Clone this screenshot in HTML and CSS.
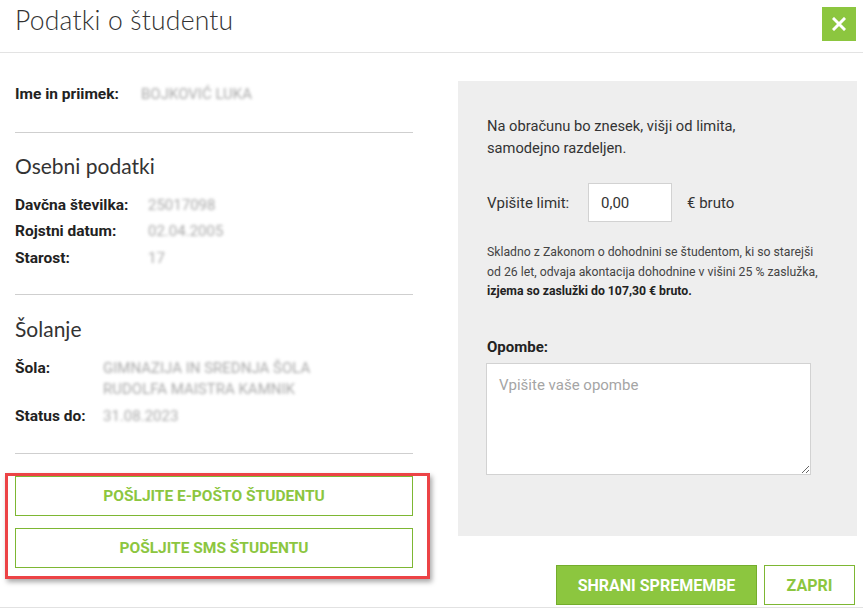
FILE: index.html
```html
<!DOCTYPE html>
<html lang="sl">
<head>
<meta charset="utf-8">
<title>Podatki o študentu</title>
<link rel="stylesheet" href="styles.css">
</head>
<body>
<div class="modal">
  <header class="header">
    <h1 class="title">Podatki o študentu</h1>
    <button class="close" aria-label="Zapri">
      <svg width="14" height="14" viewBox="0 0 14 14"><path d="M2 2 L12 12 M12 2 L2 12" stroke="#fff" stroke-width="3" stroke-linecap="square"/></svg>
    </button>
  </header>

  <div class="body">
    <div class="left">
      <dl class="info info-name">
        <dt>Ime in priimek:</dt><dd class="blur">BOJKOVIĆ LUKA</dd>
      </dl>
      <hr class="sep sep-first">
      <h2 class="section-title">Osebni podatki</h2>
      <dl class="info info-personal">
        <dt>Davčna številka:</dt><dd class="blur">25017098</dd>
        <dt>Rojstni datum:</dt><dd class="blur">02.04.2005</dd>
        <dt>Starost:</dt><dd class="blur">17</dd>
      </dl>
      <hr class="sep sep-mid">
      <h2 class="section-title section-title-school">Šolanje</h2>
      <dl class="info info-school">
        <dt>Šola:</dt><dd class="blur">GIMNAZIJA IN SREDNJA ŠOLA<br>RUDOLFA MAISTRA KAMNIK</dd>
        <dt>Status do:</dt><dd class="blur">31.08.2023</dd>
      </dl>
      <hr class="sep sep-last">
      <div class="actions">
        <button class="btn btn-outline btn-wide">POŠLJITE E-POŠTO ŠTUDENTU</button>
        <button class="btn btn-outline btn-wide">POŠLJITE SMS ŠTUDENTU</button>
        <div class="highlight"></div>
      </div>
    </div>

    <div class="right">
      <div class="panel">
        <p class="lead">Na obračunu bo znesek, višji od limita,<br>samodejno razdeljen.</p>
        <div class="limit">
          <label class="limit-label" for="limit">Vpišite limit:</label>
          <input id="limit" class="limit-input" type="text" value="0,00">
          <span class="limit-unit">€ bruto</span>
        </div>
        <p class="note">Skladno z Zakonom o dohodnini se študentom, ki so starejši<br>od 26 let, odvaja akontacija dohodnine v višini 25 % zaslužka,<br><strong>izjema so zaslužki do 107,30 € bruto.</strong></p>
        <label class="notes-label" for="notes">Opombe:</label>
        <textarea id="notes" class="notes" placeholder="Vpišite vaše opombe"></textarea>
      </div>
      <footer class="footer">
        <button class="btn btn-primary">SHRANI SPREMEMBE</button>
        <button class="btn btn-outline btn-close">ZAPRI</button>
      </footer>
    </div>
  </div>
</div>
</body>
</html>
```

FILE: styles.css
```css
* { box-sizing: border-box; }

html, body {
  margin: 0;
  padding: 0;
  background: #fff;
}

body {
  font-family: Roboto, "Liberation Sans", sans-serif;
  color: #333;
  width: 863px;
  height: 611px;
  overflow: hidden;
}

.modal {
  width: 863px;
  height: 608px;
  border-bottom: 1px solid #e2e2e2;
}

.header {
  height: 53px;
  border-bottom: 1px solid #e3e3e3;
  display: flex;
  align-items: flex-start;
  justify-content: space-between;
  padding: 0 7px 0 15px;
}

.title {
  margin: 5px 0 0;
  font-family: Lato, "Open Sans", sans-serif;
  font-weight: 300;
  font-size: 26.5px;
  line-height: 30px;
  color: #333;
  letter-spacing: 0.2px;
}

.close {
  margin-top: 7px;
  width: 34px;
  height: 34px;
  border: 0;
  padding: 0;
  background: #8cc63f;
  display: flex;
  align-items: center;
  justify-content: center;
}

.body {
  display: grid;
  grid-template-columns: 398px 399px;
  column-gap: 45px;
  align-items: start;
  padding: 28px 0 0 15px;
}

.left {
  padding-top: 3px;
}

.info {
  display: grid;
  margin: 0;
  row-gap: 5.5px;
  font-size: 15.5px;
  line-height: 21px;
}

.info dt {
  font-weight: 700;
  color: #222;
}

.info dd {
  margin: 0;
}

.info-name { grid-template-columns: 126px 1fr; }
.info-personal { grid-template-columns: 133px 1fr; }
.info-school { grid-template-columns: 88px 1fr; }

.blur {
  color: #a9a9a9;
  font-size: 15px;
  filter: blur(1.4px);
}

.sep {
  margin: 0;
  border: 0;
  border-top: 1px solid #cfcfcf;
}

.sep-first { margin-top: 27px; }
.sep-mid { margin-top: 25px; }
.sep-last { margin-top: 26px; }

.section-title {
  font-family: Lato, "Open Sans", sans-serif;
  font-weight: 400;
  font-size: 21px;
  line-height: 24px;
  margin: 20.5px 0 17px;
  color: #333;
}

.section-title-school {
  margin-top: 22.5px;
}

.actions {
  position: relative;
  margin-top: 22px;
  display: flex;
  flex-direction: column;
  gap: 12px;
}

.highlight {
  position: absolute;
  left: -10px;
  right: -17px;
  top: -3px;
  bottom: -11px;
  border: 3px solid #ec4346;
  box-shadow: 2px 3px 5px rgba(0, 0, 0, 0.35);
  pointer-events: none;
}

.btn {
  font-family: Roboto, "Liberation Sans", sans-serif;
  font-weight: 700;
  font-size: 15.5px;
  height: 40px;
  padding: 0;
  cursor: pointer;
  letter-spacing: 0;
}

.btn-outline {
  background: #fff;
  border: 1px solid #7db733;
  color: #8cc63f;
}

.btn-wide {
  width: 398px;
}

.btn-primary {
  background: #8cc63f;
  border: 1px solid #74ad2c;
  color: #fff;
  width: 201px;
  font-size: 16px;
}

.btn-close {
  width: 91px;
  font-size: 16px;
}

.panel {
  background: #eeeeee;
  height: 455px;
  padding: 34px 20px 0 29px;
}

.lead {
  margin: 0;
  font-size: 14.7px;
  line-height: 22px;
  color: #333;
}

.limit {
  display: flex;
  align-items: center;
  margin-top: 24px;
  font-size: 15px;
}

.limit-label {
  width: 102px;
}

.limit-input {
  width: 84px;
  height: 39px;
  border: 1px solid #d2d2d2;
  background: #fff;
  font-family: Roboto, "Liberation Sans", sans-serif;
  font-size: 15px;
  color: #333;
  padding: 0 12px;
  margin: 0 15px 0 -1px;
}

.note {
  margin: 21px 0 0;
  font-size: 12.25px;
  line-height: 19.5px;
  color: #444;
}

.note strong {
  font-weight: 700;
  color: #222;
}

.notes-label {
  display: block;
  margin-top: 35px;
  font-weight: 700;
  font-size: 15px;
  line-height: 20px;
  color: #222;
}

.notes {
  display: block;
  margin: 6px 0 0 -1px;
  width: 325px;
  height: 112px;
  border: 1px solid #d2d2d2;
  background: #fff;
  font-family: Roboto, "Liberation Sans", sans-serif;
  font-size: 15px;
  padding: 12px 12px;
  resize: vertical;
}

.notes::placeholder {
  color: #a5a5a5;
}

.footer {
  display: flex;
  justify-content: flex-end;
  gap: 7px;
  padding: 29px 2px 0 0;
}
```
